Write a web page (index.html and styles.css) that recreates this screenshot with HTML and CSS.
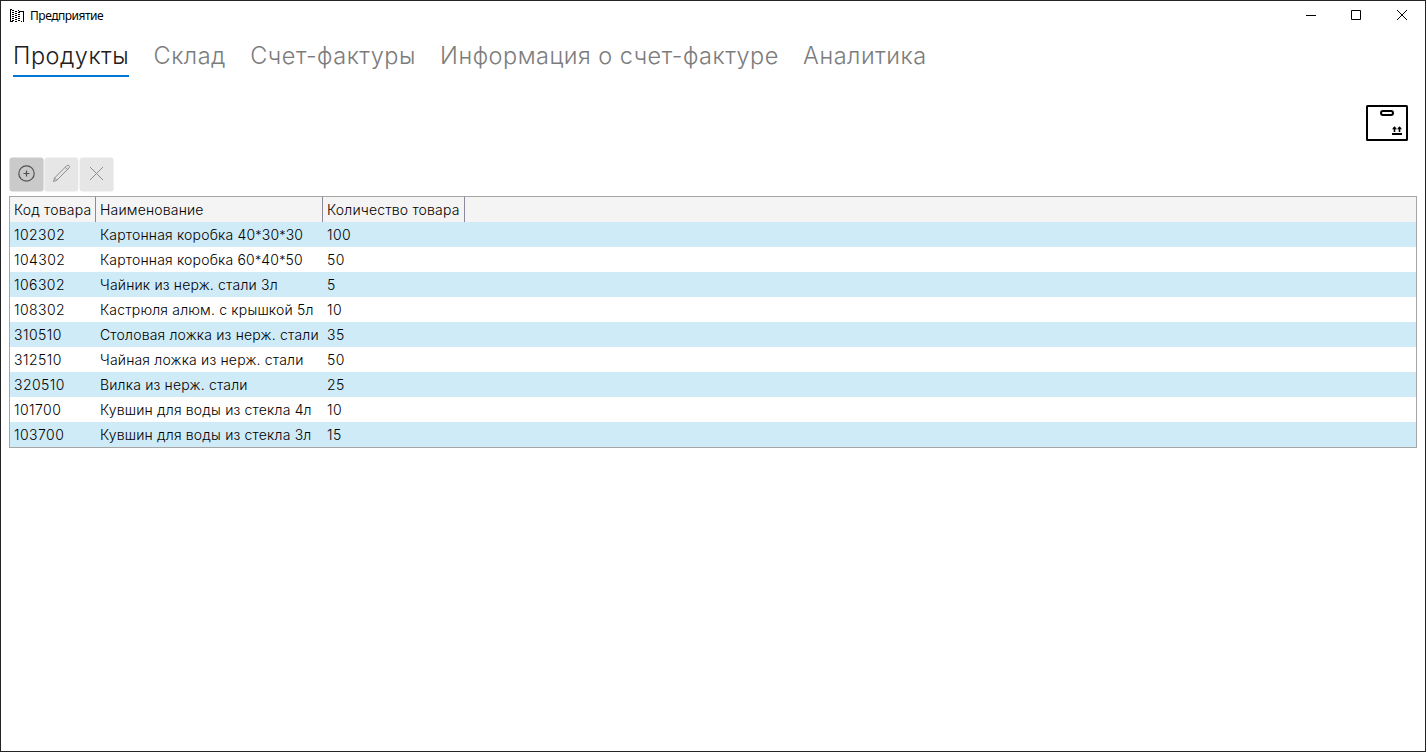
FILE: index.html
```
<!DOCTYPE html>
<html lang="ru">
<head>
<meta charset="utf-8">
<title>Предприятие</title>
<link rel="stylesheet" href="styles.css">
</head>
<body>
<div class="window">
  <header class="titlebar">
    <svg class="app-icon" width="16" height="16" viewBox="0 0 16 16" shape-rendering="crispEdges">
      <path d="M1.500 1v13M10.500 3v2M14.500 3v11" stroke="#000" fill="none"/>
      <path d="M1 1.500h2M10 3.500h5M2 13.500h2M12 13.500h1" stroke="#000" fill="none"/>
      <path d="M4 2v11M7 3v11" stroke="#000" stroke-width="2" fill="none" stroke-dasharray="1 1"/>
      <path d="M9.500 2v12M10.500 6v8" stroke="#000" fill="none" stroke-dasharray="1 1"/>
    </svg>
    <span class="caption">Предприятие</span>
    <div class="controls">
      <svg class="control" width="45" height="29" viewBox="0 0 45 29" fill="none" stroke="#000"><path d="M17 14.500h10"/></svg>
      <svg class="control" width="45" height="29" viewBox="0 0 45 29" fill="none" stroke="#000"><path d="M17.500 9.500h9v9h-9z"/></svg>
      <svg class="control" width="45" height="29" viewBox="0 0 45 29" fill="none" stroke="#000"><path d="M18 9l10 10M28 9l-10 10"/></svg>
    </div>
  </header>
  <nav class="tabs">
    <a class="tab tab-active">Продукты</a>
    <a class="tab">Склад</a>
    <a class="tab">Счет-фактуры</a>
    <a class="tab">Информация о счет-фактуре</a>
    <a class="tab">Аналитика</a>
  </nav>
  <div class="banner">
    <svg width="42" height="36" viewBox="0 0 42 36" fill="none" stroke="#000" stroke-width="2">
      <rect x="1" y="1" width="40" height="34" rx=".5"/>
      <rect x="15" y="6" width="12" height="4" rx="2"/>
      <path d="M26 29h10" />
      <path d="M28.500 27v-5M33.500 27v-5" stroke-width="1.600"/>
      <path d="M26 24.200l2.500-3 2.500 3zM31 24.200l2.500-3 2.500 3z" fill="#000" stroke="none"/>
    </svg>
  </div>
  <div class="toolbar">
    <button class="tool tool-on"><svg width="35" height="35" viewBox="0 0 35 35" fill="none" stroke="#505050" stroke-width="1.200"><rect class="plate" x=".4" y=".4" width="34.200" height="34.200" rx="3"/><circle cx="17.500" cy="16.500" r="7.700"/><path d="M14.500 16.500h6M17.500 13.500v6"/></svg></button>
    <button class="tool"><svg width="35" height="35" viewBox="0 0 35 35" fill="none" stroke="#8c8c8c"><rect class="plate" x=".4" y=".4" width="33.900" height="34.200" rx="3"/><path d="M9.500 24.500l1-3.500L22.800 8.700a1.300 1.300 0 0 1 2.200 2.200L12.900 23.200zM10.500 21l2.400 2.200M21.300 10.200l2.200 2.200"/></svg></button>
    <button class="tool"><svg width="35" height="35" viewBox="0 0 35 35" fill="none" stroke="#8c8c8c"><rect class="plate" x=".6" y=".4" width="34" height="34.200" rx="3"/><path d="M11 10l13 13M24 10l-13 13"/></svg></button>
  </div>
  <div class="grid">
    <div class="row head"><span>Код товара</span><span>Наименование</span><span>Количество товара</span></div>
    <div class="row"><span>102302</span><span>Картонная коробка 40<i>*</i>30<i>*</i>30</span><span>100</span></div>
    <div class="row"><span>104302</span><span>Картонная коробка 60<i>*</i>40<i>*</i>50</span><span>50</span></div>
    <div class="row"><span>106302</span><span>Чайник из нерж. стали 3л</span><span>5</span></div>
    <div class="row"><span>108302</span><span>Кастрюля алюм. с крышкой 5л</span><span>10</span></div>
    <div class="row"><span>310510</span><span>Столовая ложка из нерж. стали</span><span>35</span></div>
    <div class="row"><span>312510</span><span>Чайная ложка из нерж. стали</span><span>50</span></div>
    <div class="row"><span>320510</span><span>Вилка из нерж. стали</span><span>25</span></div>
    <div class="row"><span>101700</span><span>Кувшин для воды из стекла 4л</span><span>10</span></div>
    <div class="row"><span>103700</span><span>Кувшин для воды из стекла 3л</span><span>15</span></div>
  </div>
</div>
</body>
</html>
```
FILE: styles.css
```
* { box-sizing: border-box; }
body { margin: 0; font-family: Inter, sans-serif; background: #fff; }
.window { height: 752px; border: 1px solid #242426; background: #fff; overflow: hidden; }
.titlebar { display: flex; align-items: center; height: 29px; padding-left: 8px; }
.app-icon { flex: none; }
.caption { margin-left: 5px; font: 12px/16px "Noto Sans", sans-serif; letter-spacing: -0.48px; color: #000; }
.controls { display: flex; margin-left: auto; margin-right: 1px; }
.control { display: block; }
.tabs { display: flex; gap: 24.3px; height: 47px; padding-left: 12px; }
.tab { height: 47px; font-size: 23.500px; font-weight: 300; letter-spacing: 0.5px; line-height: 52px; white-space: nowrap; color: #7c7c7c; }
.tab-active { color: #202020; border-bottom: 2px solid #0078d7; }
.banner { display: flex; justify-content: flex-end; padding: 28px 17px 0 0; height: 80px; }
.toolbar { display: flex; padding-left: 8px; height: 39px; }
.tool { width: 35px; height: 35px; padding: 0; border: 0; background: none; }
.tool svg { display: block; }
.plate { fill: #e6e6e6; stroke: none; }
.tool-on .plate { fill: #cacaca; }
.grid { margin: 0 8px; border: 1px solid #a6a6a6; }
.row { display: grid; grid-template-columns: 86px 227px 142px 1fr; height: 25px; font-size: 14px; font-weight: 300; letter-spacing: 0.18px; line-height: 25px; color: #000; white-space: nowrap; }
.row span { padding-left: 4px; }
.row:not(.head) span:nth-child(1) { letter-spacing: 0.45px; }
.row:not(.head) span:nth-child(3) { letter-spacing: 0.4px; }
.row i { font-style: normal; font-size: 12.500px; }
.row:nth-child(even) { background: #d0ebf8; }
.head { background: #f4f4f4; }
.head span { border-right: 1px solid #8a8a9c; }
```
